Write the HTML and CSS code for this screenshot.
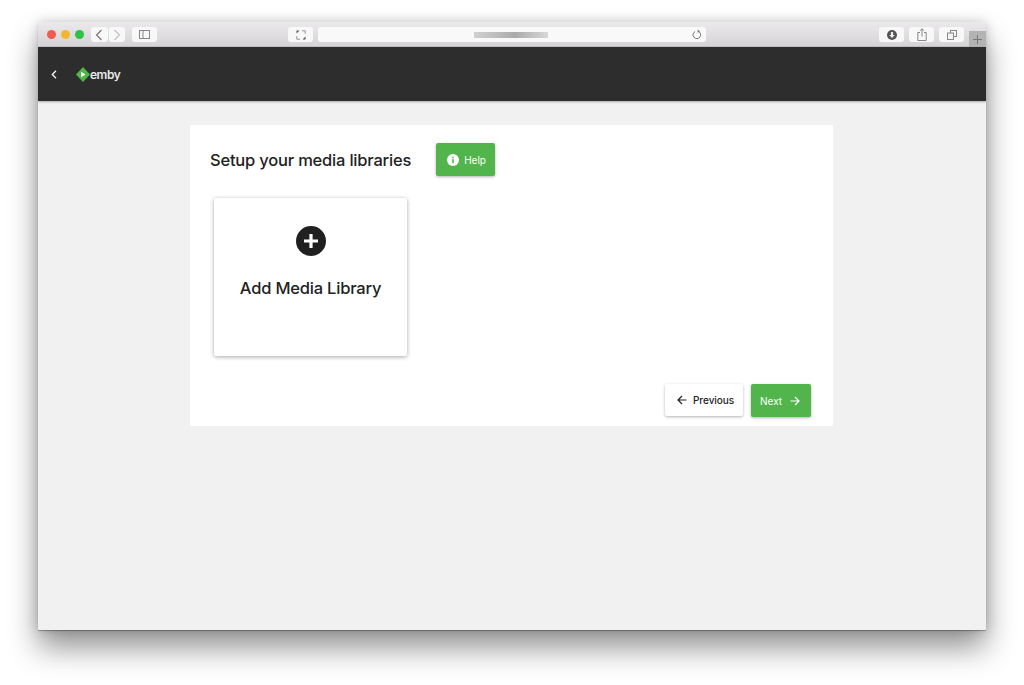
FILE: index.html
```html
<!DOCTYPE html>
<html lang="en">
<head>
<meta charset="utf-8">
<title>Emby setup</title>
<link rel="stylesheet" href="styles.css">
</head>
<body>
<div class="stage">
  <div class="window">
    <div class="titlebar">
      <div class="lights"><i class="light red"></i><i class="light yellow"></i><i class="light green"></i></div>
      <div class="navpair">
        <span class="tb-btn nav"><svg width="8" height="12" viewBox="0 0 8 12"><path d="M6.5 1 1.5 6l5 5" fill="none" stroke="#707070" stroke-width="1.1"/></svg></span>
        <span class="tb-btn nav"><svg width="8" height="12" viewBox="0 0 8 12"><path d="M1.5 1l5 5-5 5" fill="none" stroke="#bdbdbd" stroke-width="1.1"/></svg></span>
      </div>
      <span class="tb-btn sidebar"><svg width="11" height="9" viewBox="0 0 11 9"><rect x=".5" y=".5" width="10" height="8" fill="none" stroke="#888"/><path d="M4 .5v8" stroke="#888"/></svg></span>
      <span class="tb-btn resize"><svg width="10" height="10" viewBox="0 0 10 10"><path d="M.5.5h3l-3 3zM9.500 9.500h-3l3-3z" fill="#555"/><path d="M6 .8h3.200v3M4 9.200H.8v-3" fill="none" stroke="#888" stroke-width=".9"/></svg></span>
      <div class="urlbar">
        <span class="url-blur"></span>
        <svg class="reload" width="10" height="11" viewBox="0 0 10 11"><path d="M6.600 2.400a3.800 3.800 0 1 1-3.600.1" fill="none" stroke="#777" stroke-width="1"/><path d="M5.600.5v3.600L8 2.300z" fill="#777"/></svg>
      </div>
      <div class="tools">
        <span class="tb-btn tool"><svg width="10" height="10" viewBox="0 0 10 10"><circle cx="5" cy="5" r="5" fill="#555"/><path d="M3.900 2h2.200v3h1.600L5 8 2.300 5h1.600z" fill="#eee"/></svg></span>
        <span class="tb-btn tool"><svg width="10" height="13" viewBox="0 0 10 13"><path d="M3 4.500H.8v8h8.400v-8H7M5 8.500V.8M3 2.800 5 .8l2 2" fill="none" stroke="#888"/></svg></span>
        <span class="tb-btn tool"><svg width="10" height="10" viewBox="0 0 10 10"><rect x="3.500" y=".5" width="6" height="6" fill="none" stroke="#888"/><rect x=".5" y="3" width="6" height="6.500" fill="#f4f4f4" stroke="#888"/></svg></span>
      </div>
      <span class="newtab"><svg width="9" height="9" viewBox="0 0 9 9"><path d="M4.500 0v9M0 4.500h9" stroke="#777" stroke-width="1"/></svg></span>
    </div>
    <header class="appbar">
      <svg class="back" width="6" height="9" viewBox="0 0 6 9"><path d="M5 .8 1.300 4.500 5 8.200" fill="none" stroke="#eee" stroke-width="1.400"/></svg>
      <div class="brand">
        <svg width="14" height="15" viewBox="0 0 14 15"><path d="M7 0l7 7.500L7 15 0 7.500z" fill="#52b54b"/><path d="M5.200 4.800v5.400l4.300-2.700z" fill="#fff"/></svg>
        <span class="brand-name">emby</span>
      </div>
    </header>
    <main class="content">
      <section class="panel">
        <div class="panel-head">
          <h1 class="title">Setup your media libraries</h1>
          <a class="btn btn-green help">
            <svg width="12" height="12" viewBox="0 0 12 12"><circle cx="6" cy="6" r="6" fill="#fff"/><path d="M5.200 5.200h1.600v4H5.200zM5.200 2.700h1.600v1.500H5.200z" fill="#52b54b"/></svg>
            Help
          </a>
        </div>
        <div class="add-card">
          <svg class="add-icon" width="30" height="30" viewBox="0 0 30 30"><circle cx="15" cy="15" r="15" fill="#202020"/><path d="M15 8v14M8 15h14" stroke="#fff" stroke-width="3.200"/></svg>
          <div class="add-label">Add Media Library</div>
        </div>
        <div class="panel-foot">
          <a class="btn btn-white prev">
            <svg width="10" height="10" viewBox="0 0 10 10"><path d="M9.500 5H1M5 1 1 5l4 4" fill="none" stroke="#222" stroke-width="1.200"/></svg>
            Previous
          </a>
          <a class="btn btn-green next">
            Next
            <svg width="10" height="10" viewBox="0 0 10 10"><path d="M.5 5H9M5 1l4 4-4 4" fill="none" stroke="#fff" stroke-width="1.200"/></svg>
          </a>
        </div>
      </section>
    </main>
  </div>
</div>
</body>
</html>
```
FILE: styles.css
```css
* { box-sizing: border-box; }
html, body { margin: 0; height: 100%; background: #fff; overflow: hidden; }
body { font-family: Inter, "Liberation Sans", sans-serif; color: #222; }

.stage { padding: 22px 38px 0; height: 685px; }

.window {
  display: flex;
  flex-direction: column;
  height: 608px;
  border-radius: 4px 4px 0 0;
  box-shadow: 0 18px 30px rgba(0, 0, 0, .42), 0 0 12px rgba(0, 0, 0, .18), 0 1px 1px rgba(0, 0, 0, .3);
  overflow: hidden;
}

/* Browser chrome */
.titlebar {
  display: flex;
  align-items: flex-start;
  flex: none;
  height: 25px;
  padding: 5px 0 0 9px;
  background: linear-gradient(#ebe9eb, #d5d3d5);
  border-bottom: 1px solid #c4c2c4;
}
.lights { display: flex; gap: 5px; margin-top: 3px; }
.light { width: 9px; height: 9px; border-radius: 50%; display: block; }
.red { background: #f25b50; }
.yellow { background: #f5b62f; }
.green { background: #2fc244; }

.tb-btn {
  display: flex;
  align-items: center;
  justify-content: center;
  height: 15px;
  background: #f8f8f8;
  border-radius: 3px;
}
.navpair { display: flex; gap: 1px; margin-left: 7px; }
.nav { width: 16.500px; }
.sidebar { width: 25px; margin-left: 7px; }
.resize { width: 25px; margin-left: 131px; }
.urlbar {
  position: relative;
  width: 388px;
  height: 15px;
  margin-left: 5px;
  background: #f9f9f9;
  border-radius: 3px;
  display: flex;
  align-items: center;
  justify-content: flex-end;
  padding-right: 4px;
}
.url-blur {
  position: absolute;
  left: 156px;
  top: 5px;
  width: 74px;
  height: 6px;
  background: linear-gradient(90deg, #d0d0d0, #bdbdbd 30%, #aaa 55%, #d8d8d8);
  filter: blur(.6px);
}
.tools { display: flex; gap: 5px; margin-left: 173px; }
.tool { width: 25px; }
.newtab {
  display: flex;
  align-items: center;
  justify-content: center;
  flex: none;
  width: 17px;
  height: 16px;
  margin: 4px 0 0 auto;
  background: #b4b3b4;
}

/* App header */
.appbar {
  display: flex;
  align-items: center;
  flex: none;
  height: 54px;
  padding-left: 13px;
  background: #2d2d2d;
  box-shadow: 0 1px 2px rgba(0, 0, 0, .3);
  position: relative;
}
.brand { display: flex; align-items: center; margin-left: 19px; }
.brand-name { color: #e8e8e8; font-size: 12px; font-weight: 600; letter-spacing: -.5px; }

/* Content */
.content { flex: 1; padding: 24px 0 0 152px; background: #f1f1f1; }
.panel {
  display: flex;
  flex-direction: column;
  width: 643px;
  height: 301px;
  padding: 18px 22px 0 20px;
  background: #fff;
}
.panel-head { display: flex; align-items: center; gap: 25px; }
.title { margin: 0; font-size: 16.500px; font-weight: 500; letter-spacing: -.2px; color: #222; }
.btn {
  display: inline-flex;
  align-items: center;
  font-size: 10px;
  border-radius: 2px;
  box-shadow: 0 1px 3px rgba(0, 0, 0, .3);
}
.btn-green { background: #52b54b; color: #fff; font-weight: 400; }
.btn-white { background: #fff; color: #222; font-weight: 500; letter-spacing: -.05px; }
.help { height: 33px; width: 59px; padding-left: 11px; gap: 5px; }
.add-card {
  display: flex;
  flex-direction: column;
  align-items: center;
  width: 193px;
  height: 158px;
  margin: 22px 0 0 4px;
  padding-top: 28px;
  border-radius: 2px;
  box-shadow: 0 1px 4px rgba(0, 0, 0, .35);
}
.add-label { margin-top: 22px; font-size: 16.500px; font-weight: 500; letter-spacing: -.2px; color: #222; }
.panel-foot { display: flex; justify-content: flex-end; gap: 8px; margin-top: 28px; }
.prev { width: 78px; height: 32px; padding-left: 12px; gap: 6px; }
.next { width: 60px; height: 33px; padding-left: 9px; gap: 8px; }
```
